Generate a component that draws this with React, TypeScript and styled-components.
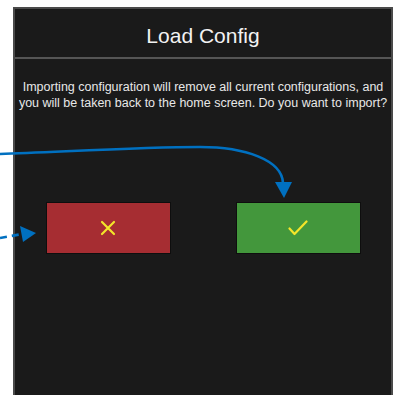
import React from "react";
import styled, { createGlobalStyle } from "styled-components";

const Global = createGlobalStyle`
  html, body { margin: 0; padding: 0; background: #ffffff; }
  body { font-family: "Liberation Sans", Arial, sans-serif; overflow: hidden; }
`;

const Page = styled.div`
  position: relative;
  width: 397px;
  height: 395px;
  overflow: hidden;
`;

const Panel = styled.section`
  margin: 7px 0 0 13px;
  width: 376px;
  height: 420px;
  border: 2px solid #4a4a4a;
  background: #1a1a1a;
  display: flex;
  flex-direction: column;
`;

const Header = styled.header`
  height: 50px;
  border-bottom: 2px solid #555555;
  display: flex;
  align-items: center;
  justify-content: center;
  padding-top: 6px;
  box-sizing: border-box;
`;

const Title = styled.h1`
  margin: 0;
  font-size: 21px;
  font-weight: 400;
  color: #f2f2f2;
  font-family: "Liberation Sans", Arial, sans-serif;
`;

const Message = styled.p`
  margin: 20px -8px 0;
  font-size: 12.5px;
  line-height: 16px;
  color: #e8e8e8;
  text-align: center;
`;

const Actions = styled.div`
  display: flex;
  justify-content: center;
  gap: 65px;
  margin-top: 91px;
`;

const ActionButton = styled.button<{ $tone: "cancel" | "confirm" }>`
  width: 125px;
  height: 52px;
  box-sizing: border-box;
  border: 1px solid #0e0e0e;
  background: ${(p) => (p.$tone === "cancel" ? "#a62d32" : "#43973c")};
  display: flex;
  align-items: center;
  justify-content: center;
  padding: 0;
  cursor: pointer;
`;

const Annotations = styled.svg`
  position: absolute;
  left: 0;
  top: 0;
  pointer-events: none;
`;

export default function App() {
  return (
    <Page>
      <Global />
      <Panel>
        <Header>
          <Title>Load Config</Title>
        </Header>
        <Message>
          Importing configuration will remove all current configurations, and
          <br />
          you will be taken back to the home screen. Do you want to import?
        </Message>
        <Actions>
          <ActionButton $tone="cancel" aria-label="Cancel">
            <svg width="16" height="16" viewBox="0 0 16 16">
              <path d="M2 2 L14 14 M14 2 L2 14" stroke="#f3e52a" strokeWidth="2.2" strokeLinecap="round" fill="none" />
            </svg>
          </ActionButton>
          <ActionButton $tone="confirm" aria-label="Confirm">
            <svg width="20" height="16" viewBox="0 0 20 16">
              <path d="M1.5 8.5 L6.5 14 L18.5 1.5" stroke="#f3e52a" strokeWidth="2.2" strokeLinecap="round" strokeLinejoin="round" fill="none" />
            </svg>
          </ActionButton>
        </Actions>
      </Panel>
      <Annotations width="397" height="395" viewBox="0 0 397 395">
        <path d="M0 154 C60 152 140 147 200 147 C245 147 282 160 283 183" stroke="#0070c0" strokeWidth="2.6" fill="none" />
        <polygon points="275,182 292,182 284,198" fill="#0070c0" />
        <path d="M0 238 L22 234" stroke="#0070c0" strokeWidth="2.6" strokeDasharray="7 5" fill="none" />
        <polygon points="20,226 36,233 23,242" fill="#0070c0" />
      </Annotations>
    </Page>
  );
}
